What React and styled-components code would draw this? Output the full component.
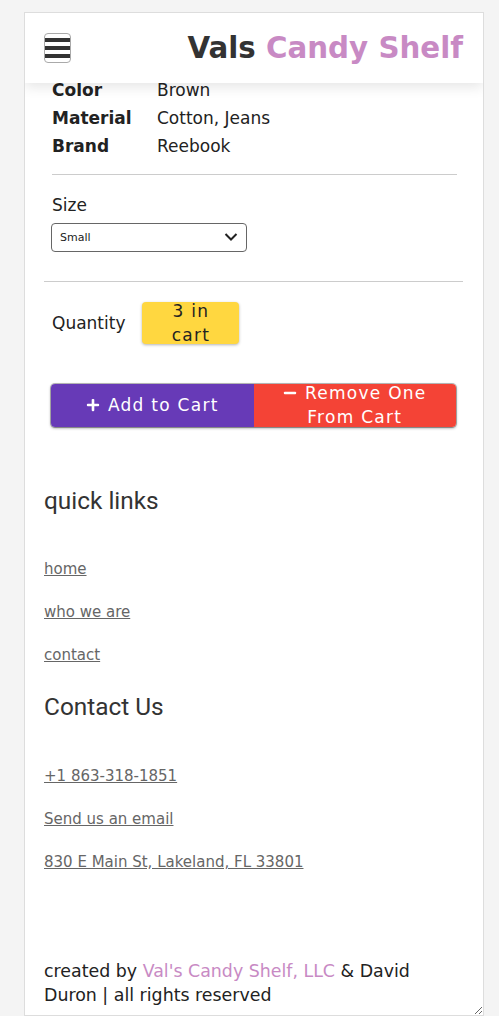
import React, { useState } from "react";
import styled, { createGlobalStyle } from "styled-components";
import { FaPlus, FaMinus } from "react-icons/fa";

const GlobalStyle = createGlobalStyle`
  body {
    margin: 0;
    background: #f4f4f4;
    font-family: "DejaVu Sans", "Liberation Sans", sans-serif;
    color: #222;
  }
`;

const Panel = styled.div`
  box-sizing: border-box;
  margin: 12px 0 0 24px;
  width: 460px;
  height: 1004px;
  background: #fff;
  border: 1px solid #ddd;
  resize: both;
  overflow: hidden;
`;

const Header = styled.header`
  position: relative;
  z-index: 1;
  height: 70px;
  display: flex;
  align-items: center;
  justify-content: space-between;
  padding: 0 20px 0 19px;
  background: #fff;
  box-shadow: 0 4px 12px rgba(0, 0, 0, 0.1);
`;

const MenuButton = styled.button`
  box-sizing: border-box;
  width: 27px;
  height: 30px;
  padding: 4px 0;
  border: 1px solid #aaa;
  border-radius: 4px;
  background: #fff;
  display: flex;
  flex-direction: column;
  justify-content: space-between;
  cursor: pointer;
`;

const Bar = styled.span`
  display: block;
  height: 4px;
  background: #333;
`;

const Title = styled.h1`
  margin: 0;
  font-size: 29.3px;
  font-weight: bold;
  color: #333;
  white-space: nowrap;
`;

const Pink = styled.span`
  color: #c88ac4;
`;

const Main = styled.main`
  padding: 0 20px 0 19px;
`;

const Specs = styled.dl`
  margin: -7px 0 0;
  padding: 0 8px;
  display: grid;
  grid-template-columns: 105px 1fr;
  font-size: 17px;
  line-height: 28px;
`;

const SpecName = styled.dt`
  font-weight: bold;
`;

const SpecValue = styled.dd`
  margin: 0;
`;

const Divider = styled.hr`
  margin: ${(p) => (p.inset ? "14px 6px 0 8px" : "0")};
  border: none;
  border-top: 1px solid #ccc;
`;

const SizeBlock = styled.div`
  padding: 18px 8px 29px;
  font-size: 17px;
  line-height: 25.5px;
`;

const SelectWrap = styled.div`
  position: relative;
  width: 196px;
  margin: 4px 0 0 -1px;
`;

const Select = styled.select`
  box-sizing: border-box;
  width: 100%;
  height: 29px;
  padding: 0 30px 0 8px;
  appearance: none;
  border: 1px solid #666;
  border-radius: 4px;
  background: #fff;
  font-family: "DejaVu Sans", sans-serif;
  font-size: 11px;
  color: #222;
`;

const Chevron = styled.svg`
  position: absolute;
  right: 9px;
  top: 9px;
  pointer-events: none;
`;

const QuantityRow = styled.div`
  display: flex;
  align-items: center;
  gap: 17px;
  margin-top: 20px;
  padding-left: 8px;
  font-size: 17px;
`;

const Badge = styled.div`
  box-sizing: border-box;
  width: 97px;
  height: 42px;
  padding: 0 14px;
  display: flex;
  align-items: center;
  justify-content: center;
  text-align: center;
  line-height: 24px;
  letter-spacing: 1.27px;
  background: #ffd740;
  border-radius: 4px;
  box-shadow: 0 1px 3px rgba(0, 0, 0, 0.3);
`;

const ButtonGroup = styled.div`
  display: flex;
  margin: 40px 7px 0;
  border-radius: 4px;
  overflow: hidden;
  box-shadow: 0 1px 3px rgba(0, 0, 0, 0.45), 0 0 0 1px rgba(0, 0, 0, 0.25);
`;

const CartButton = styled.button`
  flex: 1;
  height: 43px;
  display: flex;
  align-items: center;
  justify-content: center;
  padding: 0 8px;
  border: none;
  background: ${(p) => (p.danger ? "#f44336" : "#673ab7")};
  color: #fff;
  font-family: "DejaVu Sans", sans-serif;
  font-size: 17px;
  line-height: 24px;
  letter-spacing: 1.27px;
  text-align: center;
  cursor: pointer;

  svg {
    vertical-align: -1px;
    margin-right: 8px;
  }
`;

const Footer = styled.footer`
  padding: 60px 0 0;
`;

const Heading = styled.h2`
  margin: 0;
  font-family: Roboto, sans-serif;
  font-weight: normal;
  font-size: 24.4px;
  line-height: 28px;
  color: #333;
`;

const LinkList = styled.ul`
  list-style: none;
  margin: ${(p) => (p.last ? "46px 0 0" : "45px 0 29px")};
  padding: 0;
  display: flex;
  flex-direction: column;
  gap: 25px;
  font-size: 15px;
  line-height: 18px;
`;

const FooterLink = styled.a`
  color: #666;
  text-decoration: underline;
`;

const Credit = styled.p`
  margin: 88px 0 0;
  font-size: 17.4px;
  line-height: 24px;
  color: #222;
`;

const CreditLink = styled.a`
  color: #c88ac4;
  text-decoration: none;
`;

const specs = [
  ["Color", "Brown"],
  ["Material", "Cotton, Jeans"],
  ["Brand", "Reebook"],
];

const quickLinks = ["home", "who we are", "contact"];
const contactLinks = ["+1 863-318-1851", "Send us an email", "830 E Main St, Lakeland, FL 33801"];

export default function App() {
  const [size, setSize] = useState("Small");
  const [inCart, setInCart] = useState(3);

  return (
    <>
      <GlobalStyle />
      <Panel>
        <Header>
          <MenuButton aria-label="menu">
            <Bar />
            <Bar />
            <Bar />
          </MenuButton>
          <Title>
            Vals <Pink>Candy Shelf</Pink>
          </Title>
        </Header>
        <Main>
          <Specs>
            {specs.map(([name, value]) => (
              <React.Fragment key={name}>
                <SpecName>{name}</SpecName>
                <SpecValue>{value}</SpecValue>
              </React.Fragment>
            ))}
          </Specs>
          <Divider inset />
          <SizeBlock>
            <div>Size</div>
            <SelectWrap>
              <Select value={size} onChange={(e) => setSize(e.target.value)}>
                <option>Small</option>
                <option>Medium</option>
                <option>Large</option>
              </Select>
              <Chevron width="14" height="10" viewBox="0 0 14 10">
                <path d="M1.5 2 L7 7.5 L12.5 2" fill="none" stroke="#222" strokeWidth="2" />
              </Chevron>
            </SelectWrap>
          </SizeBlock>
          <Divider />
          <QuantityRow>
            <span>Quantity</span>
            <Badge>{inCart} in cart</Badge>
          </QuantityRow>
          <ButtonGroup>
            <CartButton onClick={() => setInCart(inCart + 1)}>
              <span>
                <FaPlus size={14} />
                Add to Cart
              </span>
            </CartButton>
            <CartButton danger onClick={() => setInCart(Math.max(0, inCart - 1))}>
              <span>
                <FaMinus size={14} />
                Remove One From Cart
              </span>
            </CartButton>
          </ButtonGroup>
          <Footer>
            <Heading>quick links</Heading>
            <LinkList>
              {quickLinks.map((l) => (
                <li key={l}>
                  <FooterLink href="#">{l}</FooterLink>
                </li>
              ))}
            </LinkList>
            <Heading>Contact Us</Heading>
            <LinkList last>
              {contactLinks.map((l) => (
                <li key={l}>
                  <FooterLink href="#">{l}</FooterLink>
                </li>
              ))}
            </LinkList>
            <Credit>
              created by <CreditLink href="#">Val's Candy Shelf, LLC</CreditLink> &amp; David Duron | all
              rights reserved
            </Credit>
          </Footer>
        </Main>
      </Panel>
    </>
  );
}
